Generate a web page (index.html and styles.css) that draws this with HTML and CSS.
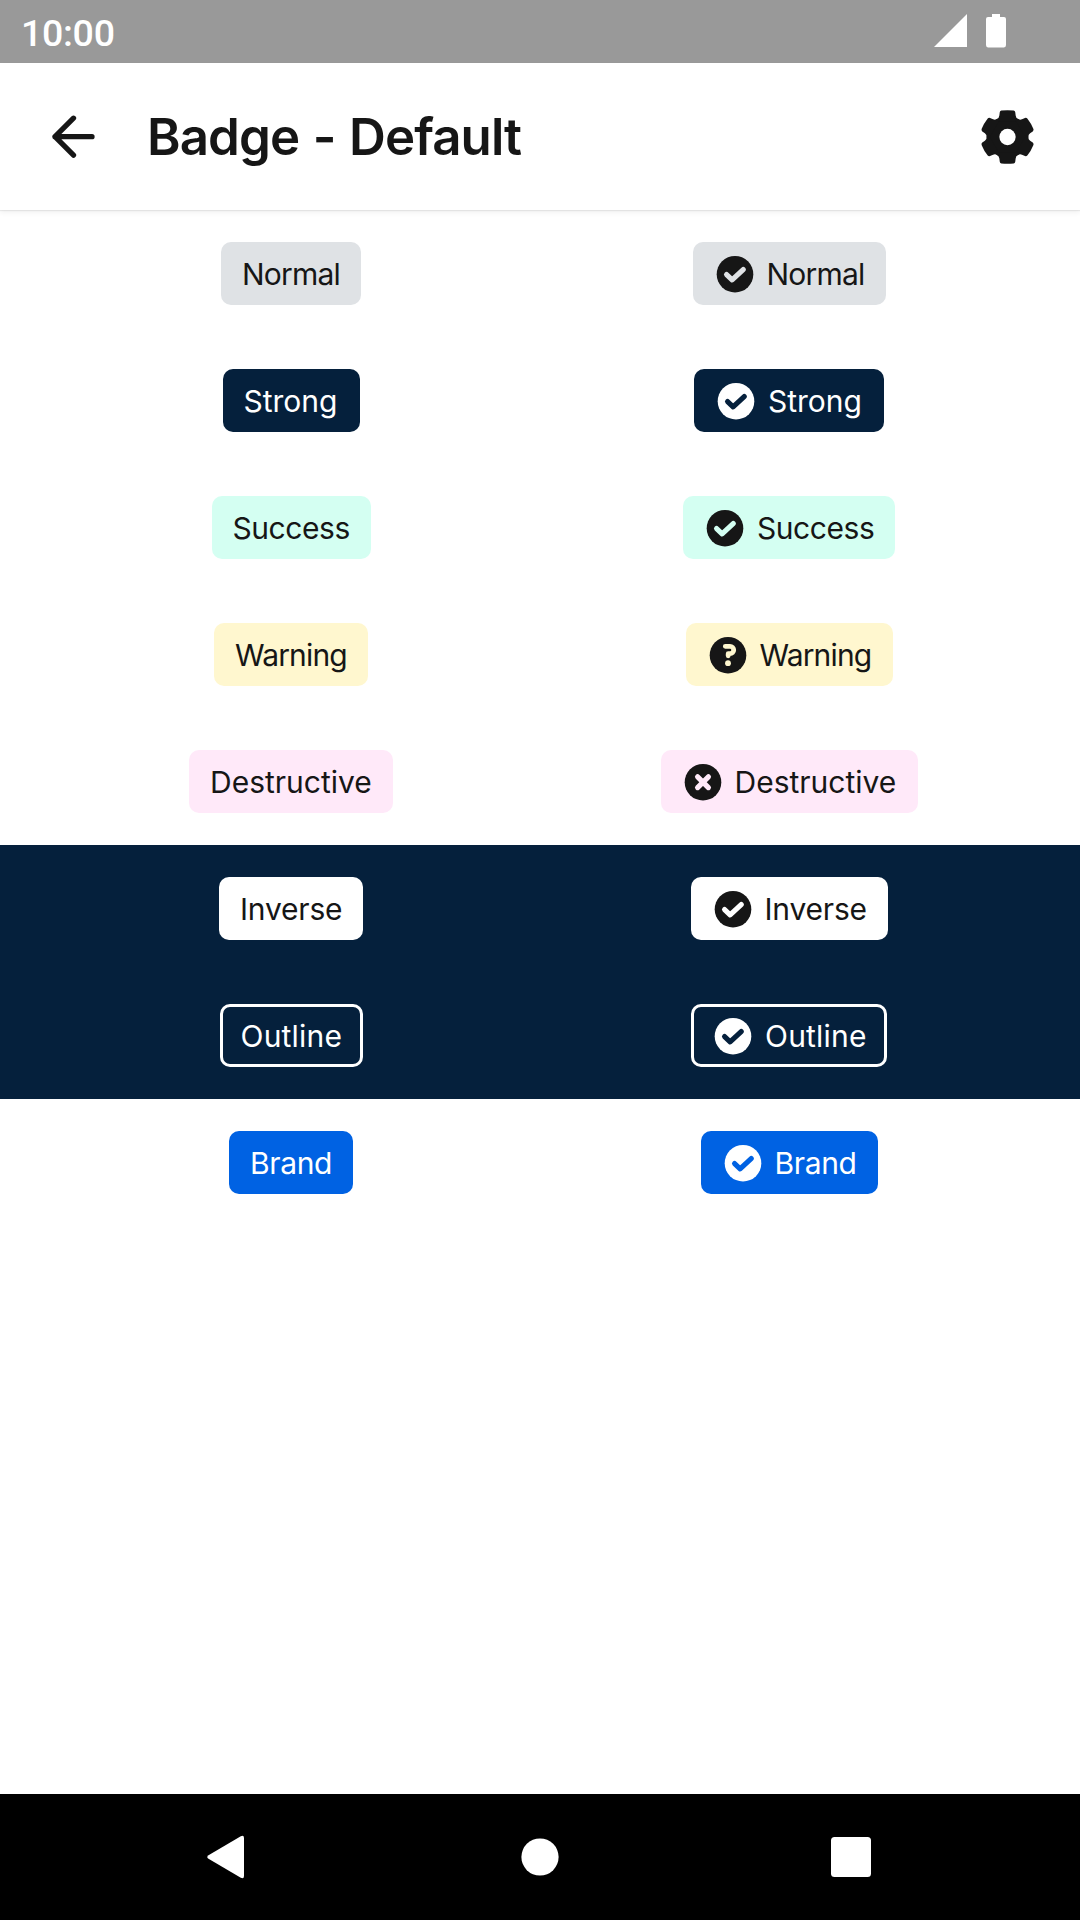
FILE: index.html
```
<!DOCTYPE html>
<html lang="en">
<head>
<meta charset="utf-8">
<title>Badge - Default</title>
<link rel="stylesheet" href="styles.css">
</head>
<body>
<svg class="defs" aria-hidden="true">
  <defs>
    <mask id="cut-check" maskUnits="userSpaceOnUse" x="0" y="0" width="42" height="42">
      <rect width="42" height="42" fill="#fff"/>
      <path d="M12.6 21.6l5.5 5.2L29.2 16.6" fill="none" stroke="#000" stroke-width="5.2" stroke-linecap="round" stroke-linejoin="round"/>
    </mask>
    <mask id="cut-help" maskUnits="userSpaceOnUse" x="0" y="0" width="42" height="42">
      <rect width="42" height="42" fill="#fff"/>
      <path d="M18.3 12.3H23a3.7 3.7 0 0 1 0 7.4h-1.8v2.1" fill="none" stroke="#000" stroke-width="4.8" stroke-linecap="round" stroke-linejoin="round"/>
      <circle cx="21" cy="29.2" r="2.9" fill="#000"/>
    </mask>
    <mask id="cut-close" maskUnits="userSpaceOnUse" x="0" y="0" width="42" height="42">
      <rect width="42" height="42" fill="#fff"/>
      <path d="M15.6 15.8l10.8 10.8M26.4 15.8L15.6 26.6" fill="none" stroke="#000" stroke-width="5.2" stroke-linecap="round"/>
    </mask>
    <symbol id="check" viewBox="0 0 42 42"><circle cx="21" cy="21.2" r="18.3" fill="currentColor" mask="url(#cut-check)"/></symbol>
    <symbol id="help" viewBox="0 0 42 42"><circle cx="21" cy="21.2" r="18.3" fill="currentColor" mask="url(#cut-help)"/></symbol>
    <symbol id="close" viewBox="0 0 42 42"><circle cx="21" cy="21.2" r="18.3" fill="currentColor" mask="url(#cut-close)"/></symbol>
    <path id="tooth" d="M-11 -15L-10.4 -17.6Q-8.2 -18.6 -8 -21L-7.6 -24.2Q-7.3 -25.6 -6 -25.9Q0 -26.8 6 -25.9Q7.3 -25.6 7.6 -24.2L8 -21Q8.2 -18.6 10.4 -17.6L11 -15Z"/>
  </defs>
</svg>

<div class="screen">
  <div class="status-bar">
    <span class="clock">10:00</span>
    <svg class="status-icons" viewBox="0 0 74 36" fill="#fff">
      <path d="M0 34H33V1Z"/>
      <path d="M58 1h8v3h4q2 0 2 2v26q0 2-2 2.500H54q-2-.5-2-2.500V6q0-2 2-2h4Z"/>
    </svg>
  </div>

  <header class="app-bar">
    <svg class="back" viewBox="0 0 48 48" fill="none" stroke="#161616" stroke-width="5.300" stroke-linecap="round" stroke-linejoin="round">
      <path d="M42 23.700H5M23.500 5.200L5 23.700L23.500 42.200"/>
    </svg>
    <h1 class="title">Badge - Default</h1>
    <svg class="settings" viewBox="-27 -26.500 53 53" fill="#161616">
      <circle r="20.300"/>
      <use href="#tooth"/>
      <use href="#tooth" transform="rotate(60)"/>
      <use href="#tooth" transform="rotate(120)"/>
      <use href="#tooth" transform="rotate(180)"/>
      <use href="#tooth" transform="rotate(240)"/>
      <use href="#tooth" transform="rotate(300)"/>
      <circle r="8" fill="#fff"/>
    </svg>
  </header>

  <main class="list">
    <div class="row">
      <span class="badge normal"><span class="label">Normal</span></span>
      <span class="badge normal"><svg class="icon"><use href="#check"/></svg><span class="label">Normal</span></span>
    </div>
    <div class="row">
      <span class="badge strong"><span class="label">Strong</span></span>
      <span class="badge strong"><svg class="icon"><use href="#check"/></svg><span class="label">Strong</span></span>
    </div>
    <div class="row">
      <span class="badge success"><span class="label">Success</span></span>
      <span class="badge success"><svg class="icon"><use href="#check"/></svg><span class="label">Success</span></span>
    </div>
    <div class="row">
      <span class="badge warning"><span class="label">Warning</span></span>
      <span class="badge warning"><svg class="icon"><use href="#help"/></svg><span class="label">Warning</span></span>
    </div>
    <div class="row">
      <span class="badge destructive"><span class="label">Destructive</span></span>
      <span class="badge destructive"><svg class="icon"><use href="#close"/></svg><span class="label">Destructive</span></span>
    </div>
    <div class="row dark">
      <span class="badge inverse"><span class="label">Inverse</span></span>
      <span class="badge inverse"><svg class="icon"><use href="#check"/></svg><span class="label">Inverse</span></span>
    </div>
    <div class="row dark">
      <span class="badge outline"><span class="label">Outline</span></span>
      <span class="badge outline"><svg class="icon"><use href="#check"/></svg><span class="label">Outline</span></span>
    </div>
    <div class="row">
      <span class="badge brand"><span class="label">Brand</span></span>
      <span class="badge brand"><svg class="icon"><use href="#check"/></svg><span class="label">Brand</span></span>
    </div>
  </main>

  <nav class="nav-bar">
    <svg class="nav-icon" viewBox="0 0 48 48" fill="#fff"><path d="M6.500 22.200L38.800 3.200Q42 1.800 42 5V43Q42 46.200 38.800 44.800L6.500 25.800Q4 24 6.500 22.200Z"/></svg>
    <svg class="nav-icon" viewBox="0 0 48 48" fill="#fff"><circle cx="25" cy="24" r="18.600"/></svg>
    <svg class="nav-icon" viewBox="0 0 48 48" fill="#fff"><rect x="4" y="4" width="40" height="40" rx="3.500"/></svg>
  </nav>
</div>
</body>
</html>
```
FILE: styles.css
```
* { box-sizing: border-box; }

body {
  margin: 0;
  background: #fff;
  color: #161616;
  font-family: Inter, "Liberation Sans", sans-serif;
}

.defs { display: block; width: 0; height: 0; }

.screen {
  display: flex;
  flex-direction: column;
  width: 1080px;
  height: 1920px;
}

.status-bar {
  display: flex;
  justify-content: space-between;
  align-items: flex-start;
  height: 63px;
  padding: 13px 72px 0 21px;
  background: #999;
  color: #fff;
}

.clock {
  font: 500 37.5px/40px Roboto, sans-serif;
  letter-spacing: -0.3px;
}

.status-icons { width: 74px; height: 36px; }

.app-bar {
  display: flex;
  align-items: center;
  height: 147px;
  padding: 0 46px 0 50px;
  box-shadow: 0 1px 1px rgba(0, 0, 0, 0.07), 0 3px 5px rgba(0, 0, 0, 0.05);
}

.back { width: 48px; height: 48px; }

.title {
  flex: 1;
  margin: 0 0 0 49px;
  font-size: 51px;
  font-weight: 600;
  line-height: 60px;
  letter-spacing: -0.9px;
  word-spacing: 1.5px;
}

.settings { width: 54px; height: 54px; }

.list { flex: 1; }

.row {
  display: grid;
  grid-template-columns: 1fr 1fr;
  justify-items: center;
  padding: 32px 42px;
}

.dark { background: #05203c; }

.badge {
  display: flex;
  align-items: center;
  height: 63px;
  padding: 0 21px;
  border-radius: 10px;
  font-size: 30px;
  font-weight: 400;
  line-height: 42px;
  white-space: nowrap;
}

.icon { width: 42px; height: 42px; margin-right: 11px; }

.label { width: var(--label-width); }

.normal { --label-width: 98px; background: #dfe2e5; letter-spacing: -0.8px; }
.strong { --label-width: 95px; background: #05203c; color: #fff; }
.success { --label-width: 117px; background: #d4fff2; letter-spacing: -0.45px; }
.warning { --label-width: 112px; background: #fff7cf; letter-spacing: -0.85px; }
.destructive { --label-width: 162px; background: #ffe9f9; }
.inverse { --label-width: 102px; background: #fff; letter-spacing: -0.2px; }
.outline { --label-width: 101px; padding: 0 18px; border: 3px solid #fff; color: #fff; letter-spacing: 0.2px; }
.brand { --label-width: 82px; background: #0062e3; color: #fff; letter-spacing: -0.35px; }

.nav-bar {
  display: flex;
  justify-content: space-between;
  align-items: center;
  height: 126px;
  padding: 0 205px 0 202px;
  background: #000;
}

.nav-icon { width: 48px; height: 48px; }
```
